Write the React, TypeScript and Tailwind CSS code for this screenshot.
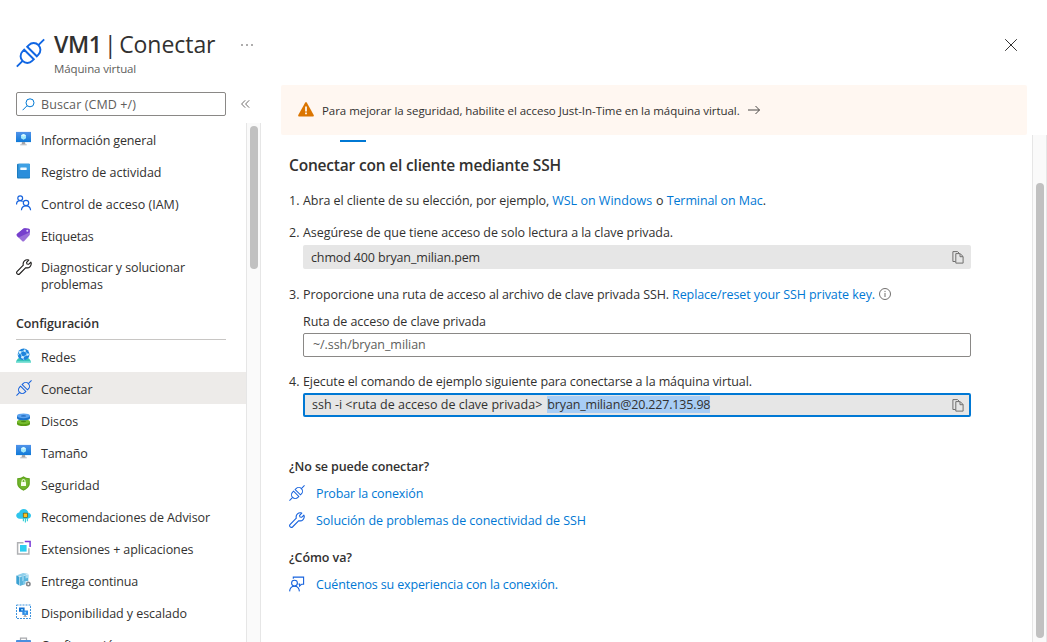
import type { ReactNode } from "react";

type IconProps = { className?: string };

function Plug({ className, weight = 1.2 }: IconProps & { weight?: number }) {
  return (
    <svg viewBox="0 0 30 30" className={className} fill="none" stroke="currentColor" strokeWidth={weight}>
      <g transform="translate(15 15) rotate(-45)">
        <path d="M-20 0H-11.5M11.5 0H20" />
        <path d="M-2.2-7V7H-4.6A7 7 0 0 1-4.6-7ZM2.2-7V7H4.6A7 7 0 0 0 4.6-7Z" />
      </g>
    </svg>
  );
}

function Wrench({ className }: IconProps) {
  return (
    <svg viewBox="0 0 16 16" className={className} fill="none" stroke="currentColor" strokeWidth="1.1" strokeLinejoin="round">
      <path d="M14.9 3.1 12.6 5.3 10.9 5 10.6 3.4 12.8 1.1A4.2 4.2 0 0 0 7.3 6.2L1 12.6A1.75 1.75 0 0 0 3.5 15L9.8 8.7A4.2 4.2 0 0 0 14.9 3.1Z" />
    </svg>
  );
}

function Monitor() {
  return (
    <svg viewBox="0 0 16 16" className="size-4">
      <defs>
        <linearGradient id="screen" x1="0" y1="0" x2="0" y2="1">
          <stop offset="0" stopColor="#5193ea" />
          <stop offset="1" stopColor="#0f7ad8" />
        </linearGradient>
      </defs>
      <path fill="url(#screen)" d="M0 .9h15v10.200H0z" />
      <path fill="#9fe8fb" d="M7.500 2.900 10 4.300v3L7.500 8.800 5 7.300v-3z" />
      <path fill="#d6f6fe" d="M7.500 2.900 10 4.300 7.500 5.700 5 4.300z" />
      <path fill="#a2a4a8" d="M6 11.100h3l.5 2.400h-4z" />
      <path fill="#b9bbbe" d="M4.200 13.300h6.600v1H4.200z" />
    </svg>
  );
}

function Log() {
  return (
    <svg viewBox="0 0 16 16" className="size-4">
      <rect x="1" y=".8" width="13" height="14.600" rx="1" fill="#1b7cc0" />
      <rect x="2.400" y=".8" width="11.600" height="13.400" rx=".8" fill="#3ea0e4" />
      <rect x="2.400" y="7" width="11.600" height="7.200" fill="#2b8edb" />
      <rect x="4.300" y="4.500" width="6.400" height="2.400" rx=".4" fill="#f4fbff" />
    </svg>
  );
}

function People() {
  return (
    <svg viewBox="0 0 16 16" className="size-4" fill="none" stroke="#1662dd" strokeWidth="1.200">
      <circle cx="4.200" cy="3.200" r="2.400" />
      <path d="M.5 9.400C.6 7 2.200 5.700 4.200 5.700c1 0 1.800.3 2.400.9" />
      <circle cx="10" cy="8" r="2.700" />
      <path d="M5.400 15.200c.2-2.700 2.200-4.400 4.600-4.400s4.400 1.700 4.600 4.400" />
    </svg>
  );
}

function Tag() {
  return (
    <svg viewBox="0 0 16 16" className="size-4">
      <path fill="#9a6fd8" d="M1.200 6.700 7.600 1.600q.7-.5 1.500-.4l3.600.5q1 .1 1 1l.2 4.300q0 .8-.6 1.400L8 14.200q-.8.800-1.700 0L1 8.900q-1-1.200.2-2.200z" />
      <path fill="#7640cd" d="M1.200 6.700 7.600 1.600q.7-.5 1.500-.4l3.600.5q1 .1 1 1l.1 2.600L2.600 10.500 1 8.900q-1-1.200.2-2.200z" />
      <circle cx="11.300" cy="3.700" r="1" fill="#e4d7fa" />
    </svg>
  );
}

function Network() {
  return (
    <svg viewBox="0 0 16 16" className="size-4">
      <path fill="#36c5b7" d="M2.200 10.200h10.600L15 13.300v1.400H0v-1.400z" />
      <path fill="#8be6dd" d="M0 13.400h15v1.400H0z" />
      <circle cx="7.600" cy="6.400" r="5.900" fill="#1c83dc" />
      <g stroke="#a9dffa" strokeWidth=".8" fill="none">
        <path d="m4 4.200 4.700-1.600 2.900 4L6.500 9.300z" />
        <path d="M4 4.200 1.900 7.500M11.600 6.600l1.800-1M6.500 9.300l1.600 2.900M8.700 2.600 9 .8" />
      </g>
      <g fill="#d5f2fe">
        <circle cx="4" cy="4.200" r="1.200" />
        <circle cx="8.700" cy="2.800" r="1.100" />
        <circle cx="11.600" cy="6.600" r="1.200" />
        <circle cx="6.500" cy="9.300" r="1.300" />
      </g>
    </svg>
  );
}

function Disks() {
  return (
    <svg viewBox="0 0 16 16" className="size-4">
      <path fill="#599b13" d="M1 9.500h13v2.200C14 13.200 11 14 7.500 14S1 13.200 1 11.700z" />
      <ellipse cx="7.500" cy="9.700" rx="6.500" ry="2.500" fill="#76bc2d" />
      <ellipse cx="7.500" cy="9.500" rx="2.600" ry=".7" fill="#4b8a10" />
      <path fill="#1b72cc" d="M1 3.700h13V6c0 1.500-3 2.300-6.500 2.300S1 7.500 1 6z" />
      <ellipse cx="7.500" cy="3.800" rx="6.500" ry="2.400" fill="#5ba3f0" />
      <ellipse cx="7.500" cy="3.900" rx="2.600" ry=".7" fill="#1b62b4" />
    </svg>
  );
}

function Shield() {
  return (
    <svg viewBox="0 0 16 16" className="size-4">
      <path fill="#5fa31c" d="M7.500.3C9 1.600 11 2.200 13.800 2.300v5.200c0 3.400-3 5.600-6.300 7.200C4.200 13.100 1.200 10.900 1.200 7.500V2.300C4 2.200 6 1.600 7.500.3z" />
      <path fill="#70b52c" d="M7.500 1.600c1.400 1 3 1.500 5.200 1.600v4.300c0 2.700-2.400 4.500-5.200 5.900-2.800-1.400-5.200-3.200-5.200-5.900V3.200C4.500 3.100 6.100 2.600 7.500 1.600z" />
      <rect x="5" y="6.100" width="5" height="3.900" rx=".5" fill="#f6fde9" />
      <path d="M6 6.200V5a1.500 1.500 0 0 1 3 0v1.200" fill="none" stroke="#f6fde9" strokeWidth="1" />
    </svg>
  );
}

function Advisor() {
  return (
    <svg viewBox="0 0 16 16" className="size-4">
      <path fill="#2fc5ec" d="M3.700 10.700C1.700 10.700.2 9.500.2 7.600c0-1.800 1.300-2.900 3-3.100C3.700 2.300 5.600 1 7.700 1c2.500 0 4.200 1.500 4.600 3.700 1.600.2 2.700 1.300 2.700 2.900 0 1.800-1.400 3.100-3.200 3.100z" />
      <path stroke="#3bd0d8" strokeWidth="1.200" d="M7.400 9.500v3.800M9.400 9.500v5M11.400 9.500v3.800" />
      <rect x="6.900" y="4.800" width="5" height="5" rx=".8" fill="#64682c" />
      <rect x="7.700" y="5.600" width="3.400" height="3.400" fill="#ffc21e" />
    </svg>
  );
}

function Extensions() {
  return (
    <svg viewBox="0 0 16 16" className="size-4">
      <path fill="none" stroke="#b0b1b4" strokeWidth="1.500" d="M7.500 2.800H1.600v11.300h11.300V8.300" />
      <rect x="4" y="5" width="6.600" height="6.600" fill="#2dcdf0" />
      <path fill="none" stroke="#7839d6" strokeWidth="1.500" d="M8.800 1.600h5.300v5.300" />
    </svg>
  );
}

function Delivery() {
  return (
    <svg viewBox="0 0 16 16" className="size-4">
      <path fill="#3ba2d3" d="M.3 3.500 3.500 4.700v9L.3 11.500z" />
      <path fill="#8fcfeb" d="M.3 3.500 7 1l5 .8-6.600 2.900z" />
      <path fill="#59b4dc" d="M4 5.300 12.300 2.500v8.300L4 14z" />
      <path fill="#8fd0ec" d="m6 4.600 2-.7v4.500l-2 .8z" />
      <path fill="#a9dcf1" d="M9.500 3.400 12.300 2.500v3.200l-2.800.9z" />
      <path fill="#fff" d="M9.300 9.200h6.200v5.900H9.300z" />
      <circle cx="12.300" cy="12" r="1.700" fill="none" stroke="#84878b" strokeWidth="1.600" />
      <path fill="#7fc9ea" d="M7 9.500 9.200 8.700V12L7 12.900z" />
    </svg>
  );
}

function Availability() {
  return (
    <svg viewBox="0 0 16 16" className="size-4">
      <rect x=".5" y="1" width="14" height="13.500" fill="none" stroke="#3f94de" strokeWidth="1" strokeDasharray="2 1" />
      <path fill="#0f6fd0" d="M3 3.500h5.600v4.300H3z" />
      <path fill="#2b8ae4" d="M6.300 6.500H12v4.400H6.300z" />
      <path fill="#8fd8fb" d="M5 5h2v1.500H5zM8.500 7.800h1.600v1.600H8.500z" />
      <path fill="#91959b" d="M8.500 10.900h1.400v1.600H8z" />
      <path fill="#a7aaae" d="M7.500 12h3.400v.8H7.500z" />
    </svg>
  );
}

function Toolbox() {
  return (
    <svg viewBox="0 0 16 16" className="size-4">
      <path fill="none" stroke="#a6a8ac" strokeWidth="1.200" d="M4.500 4.500V2.200h6v2.300" />
      <rect x="0" y="4" width="15" height="10.500" rx=".8" fill="#4a8fdf" />
    </svg>
  );
}

function Copy() {
  return (
    <svg viewBox="0 0 12 13" className="h-[13px] w-3" fill="none" stroke="#706f6e" strokeWidth="1">
      <path d="M3.500 10.500H.9V.6h4.600L7 2" />
      <path d="M3.800 2.600h4.400l2.900 2.900v6.600H3.800zM8 2.800v2.900h3" />
    </svg>
  );
}

function Feedback() {
  return (
    <svg viewBox="0 0 16 16" className="-mt-px size-4" fill="none" stroke="#1662dd" strokeWidth="1.100">
      <path d="M4.300 2.800V1.100h10.300v7.100h-1.900L10.600 10V8.100H9.500" />
      <circle cx="5.500" cy="7.100" r="2.900" />
      <path d="M.6 15.400c.2-3.100 2.200-5.200 4.900-5.200s4.700 2.100 4.900 5.200" />
    </svg>
  );
}

type Entry = { label: string; icon: ReactNode; track: string; active?: boolean };

const general: Entry[] = [
  { label: "Información general", icon: <Monitor />, track: "tracking-[-0.15px]" },
  { label: "Registro de actividad", icon: <Log />, track: "tracking-[-0.03px]" },
  { label: "Control de acceso (IAM)", icon: <People />, track: "tracking-[0.02px]" },
  { label: "Etiquetas", icon: <Tag />, track: "tracking-[-0.19px]" },
];

const settings: Entry[] = [
  { label: "Redes", icon: <Network />, track: "tracking-[-0.08px]" },
  { label: "Conectar", icon: <Plug className="size-4 text-[#1662dd]" weight={2} />, track: "tracking-[-0.15px]", active: true },
  { label: "Discos", icon: <Disks />, track: "tracking-[-0.08px]" },
  { label: "Tamaño", icon: <Monitor />, track: "tracking-[-0.15px]" },
  { label: "Seguridad", icon: <Shield />, track: "tracking-[-0.02px]" },
  { label: "Recomendaciones de Advisor", icon: <Advisor />, track: "tracking-[-0.08px]" },
  { label: "Extensiones + aplicaciones", icon: <Extensions />, track: "tracking-[-0.085px]" },
  { label: "Entrega continua", icon: <Delivery />, track: "tracking-[-0.13px]" },
  { label: "Disponibilidad y escalado", icon: <Availability />, track: "tracking-[-0.06px]" },
  { label: "Configuración", icon: <Toolbox />, track: "tracking-[-0.08px]" },
];

function NavItem({ label, icon, track, active }: Entry) {
  return (
    <li className={`flex h-8 shrink-0 items-center gap-[9px] pl-4 ${active ? "bg-[#edebe9]" : ""}`}>
      <span className="-mt-[3px] shrink-0">{icon}</span>
      <span className={`pt-px whitespace-nowrap ${track}`}>{label}</span>
    </li>
  );
}

function SettingsItem({ label, icon, track, active }: Entry) {
  return (
    <li className={`flex h-8 shrink-0 items-center gap-[9px] pt-0.5 pl-4 ${active ? "bg-[#edebe9]" : ""}`}>
      <span className="-mt-[3px] shrink-0">{icon}</span>
      <span className={`pt-px whitespace-nowrap ${track}`}>{label}</span>
    </li>
  );
}

function Step({ n, children }: { n: number; children: ReactNode }) {
  return (
    <div className="flex h-[18px] items-center whitespace-nowrap">
      <span className="w-3.5 shrink-0">{n}.</span>
      {children}
    </div>
  );
}

function HelpLink({ icon, track, children }: { icon: ReactNode; track: string; children: ReactNode }) {
  return (
    <a className="flex h-[27px] items-center gap-[11px] text-[#0078d4]">
      {icon}
      <span className={track}>{children}</span>
    </a>
  );
}

export default function App() {
  return (
    <div className="flex h-[642px] w-[1047px] flex-col overflow-hidden bg-white font-['Open_Sans','Noto_Sans',sans-serif] text-[12.5px] leading-[17px] text-[#323130]">
      <header className="flex h-[85px] shrink-0 items-start pt-[29px] pl-4">
        <Plug className="mt-[9px] h-[30px] w-[29px] text-[#1066e3]" weight={2} />
        <div className="ml-[9px]">
          <h1 className="flex h-[30px] items-center text-[23px] leading-[30px] whitespace-nowrap">
            <span className="font-semibold tracking-[-0.4px]">VM1</span>
            <span className="ml-[2.5px]">|</span>
            <span className="ml-[2.5px] tracking-[-0.05px]">Conectar</span>
          </h1>
          <p className="mt-0.5 text-[11.5px] leading-[16px] tracking-[-0.12px] text-[#605e5c]">Máquina virtual</p>
        </div>
        <svg viewBox="0 0 12 2" className="mt-[15px] ml-[26px] h-0.5 w-3 fill-[#484644]">
          <circle cx="1" cy="1" r=".8" />
          <circle cx="6" cy="1" r=".8" />
          <circle cx="11" cy="1" r=".8" />
        </svg>
        <svg viewBox="0 0 12 12" className="mt-[10px] mr-[30px] ml-auto size-3" stroke="#323130" strokeWidth="1">
          <path d="m.2.2 11.600 11.600M11.800.2.200 11.800" />
        </svg>
      </header>

      <div className="flex min-h-0 flex-1">
        <aside className="flex w-[261px] shrink-0 flex-col pt-[7px]">
          <div className="flex h-6 shrink-0 items-center pl-4">
            <div className="flex h-6 w-[210px] items-center rounded-[2px] border border-[#8a8886] pl-[5px]">
              <svg viewBox="0 0 13 13" className="size-[13px]" fill="none" stroke="#0078d4" strokeWidth="1">
                <circle cx="8" cy="4.800" r="4" />
                <path d="M5.100 7.700.6 12.200" />
              </svg>
              <span className="ml-1.5 tracking-[0.1px] text-[#605e5c]">Buscar (CMD +/)</span>
            </div>
            <svg viewBox="0 0 9 8" className="ml-[15px] h-2 w-[9px]" fill="none" stroke="#605e5c" strokeWidth=".9">
              <path d="M4.200.3.600 4l3.600 3.700M8.200.3 4.600 4l3.600 3.700" />
            </svg>
          </div>
          <div className="mt-[7px] flex min-h-0 flex-1">
            <nav className="w-[246px] overflow-hidden pt-px">
              <ul>
                {general.map((e) => (
                  <NavItem key={e.label} {...e} />
                ))}
                <li className="flex h-[50px] items-start gap-[9px] pt-[7px] pl-4">
                  <Wrench className="size-4 shrink-0 text-[#1b1a19]" />
                  <span className="w-[160px] tracking-[-0.09px]">Diagnosticar y solucionar problemas</span>
                </li>
              </ul>
              <h2 className="mr-5 ml-4 flex h-[38px] items-center border-b border-[#c8c6c4] pt-1.5 font-semibold tracking-[-0.1px]">
                Configuración
              </h2>
              <ul>
                {settings.map((e) => (
                  <SettingsItem key={e.label} {...e} />
                ))}
              </ul>
            </nav>
            <div className="w-[15px] border-x border-[#e6e6e6] bg-[#fafafa] pt-[3px] pl-[3px]">
              <div className="h-[143px] w-2 rounded-full bg-[#c1c1c1]" />
            </div>
          </div>
        </aside>

        <main className="flex min-w-0 flex-1 flex-col pl-5">
          <div className="mr-5 flex h-[50px] shrink-0 items-center rounded-[2px] bg-[#fff7f1] pl-[17px] text-[11.5px]">
            <svg viewBox="0 0 16 15" className="-mt-0.5 h-[15px] w-4">
              <path fill="#db7500" d="M7.100.8q.9-1.400 1.800 0l6.800 12.300q.6 1.300-.7 1.400H1Q-.3 14.400.3 13.100z" />
              <path stroke="#fff" strokeWidth="1.700" d="M8 4.600v4.800M8 10.600v1.700" />
            </svg>
            <span className="ml-2 pt-px tracking-[-0.05px] whitespace-nowrap">
              Para mejorar la seguridad, habilite el acceso Just-In-Time en la máquina virtual.
            </span>
            <svg viewBox="0 0 12 10" className="ml-[8px] h-2.5 w-3" fill="none" stroke="#484644" strokeWidth="1">
              <path d="M0 5h11.500M7.500 1l4 4-4 4" />
            </svg>
          </div>

          <div className="flex min-h-0 flex-1">
            <section className="w-[751px] pl-2">
              <div className="mt-[5px] ml-[51px] h-0.5 w-[26px] bg-[#0078d4]" />
              <h2 className="mt-[13px] h-5 text-[15.5px] leading-5 font-semibold tracking-[-0.18px]">
                Conectar con el cliente mediante SSH
              </h2>
              <div className="mt-4 w-[682px]">
                <Step n={1}>
                  <span className="tracking-[-0.055px]">Abra el cliente de su elección, por ejemplo,</span>
                  <a className="ml-[3px] tracking-[0.01px] text-[#0078d4]">WSL on Windows</a>
                  <span className="mr-[3px] ml-1">o</span>
                  <a className="tracking-[-0.09px] text-[#0078d4]">Terminal on Mac</a>.
                </Step>

                <div className="mt-3.5">
                  <Step n={2}>
                    <span className="tracking-[-0.068px]">Asegúrese de que tiene acceso de solo lectura a la clave privada.</span>
                  </Step>
                </div>
                <div className="mt-1 ml-3.5 flex h-6 items-center justify-between rounded-[2px] bg-[#e6e6e6] pr-[7px] pl-2">
                  <span className="tracking-[-0.138px]">chmod 400 bryan_milian.pem</span>
                  <Copy />
                </div>

                <div className="mt-4">
                  <Step n={3}>
                    <span className="tracking-[-0.086px]">Proporcione una ruta de acceso al archivo de clave privada SSH.</span>
                    <a className="ml-[3px] tracking-[-0.08px] text-[#0078d4]">Replace/reset your SSH private key.</a>
                    <svg viewBox="0 0 12 12" className="ml-1 size-3" fill="none" stroke="#605e5c" strokeWidth=".9">
                      <circle cx="6" cy="6" r="5.500" />
                      <path d="M6 5v4M6 2.900v1.200" />
                    </svg>
                  </Step>
                </div>
                <div className="mt-2.5 ml-3.5">
                  <div className="h-[18px] leading-[18px] tracking-[-0.059px]">Ruta de acceso de clave privada</div>
                  <div className="mt-[2px] flex h-6 items-center rounded-[2px] border border-[#8a8886] bg-white pb-0.5 pl-[9px] tracking-[-0.07px] text-[#605e5c]">
                    ~/.ssh/bryan_milian
                  </div>
                </div>

                <div className="mt-[15px]">
                  <Step n={4}>
                    <span className="tracking-[-0.1px]">Ejecute el comando de ejemplo siguiente para conectarse a la máquina virtual.</span>
                  </Step>
                </div>
                <div className="mt-[3px] ml-3.5 flex h-6 items-center rounded-[2px] border-2 border-[#0078d4] bg-[#e6e6e6] pr-[5px] pl-[7px] whitespace-nowrap">
                  <span className="-mt-px tracking-[0.015px]">ssh -i &lt;ruta de acceso de clave privada&gt;</span>
                  <span className="-mt-px ml-[5px] bg-[#a8cdf5] tracking-[-0.165px]">bryan_milian@20.227.135.98</span>
                  <span className="ml-auto">
                    <Copy />
                  </span>
                </div>
              </div>

              <h3 className="mt-[41px] h-[18px] leading-[18px] font-semibold tracking-[-0.114px]">¿No se puede conectar?</h3>
              <div className="mt-1">
                <HelpLink icon={<Plug className="-mt-px size-4 text-[#1662dd]" weight={1.9} />} track="tracking-[-0.13px]">
                  Probar la conexión
                </HelpLink>
                <HelpLink icon={<Wrench className="-mt-px size-4 text-[#1662dd]" />} track="tracking-[-0.044px]">
                  Solución de problemas de conectividad de SSH
                </HelpLink>
              </div>
              <h3 className="mt-[15px] h-[18px] leading-[18px] font-semibold tracking-[-0.08px]">¿Cómo va?</h3>
              <div className="mt-1">
                <HelpLink icon={<Feedback />} track="tracking-[-0.137px]">
                  Cuéntenos su experiencia con la conexión.
                </HelpLink>
              </div>
            </section>
            <div className="w-[15px] border-x border-[#e6e6e6] bg-[#fafafa] pt-12 pl-[3px]">
              <div className="h-[455px] w-2 rounded-full bg-[#c1c1c1]" />
            </div>
          </div>
        </main>
      </div>
    </div>
  );
}
